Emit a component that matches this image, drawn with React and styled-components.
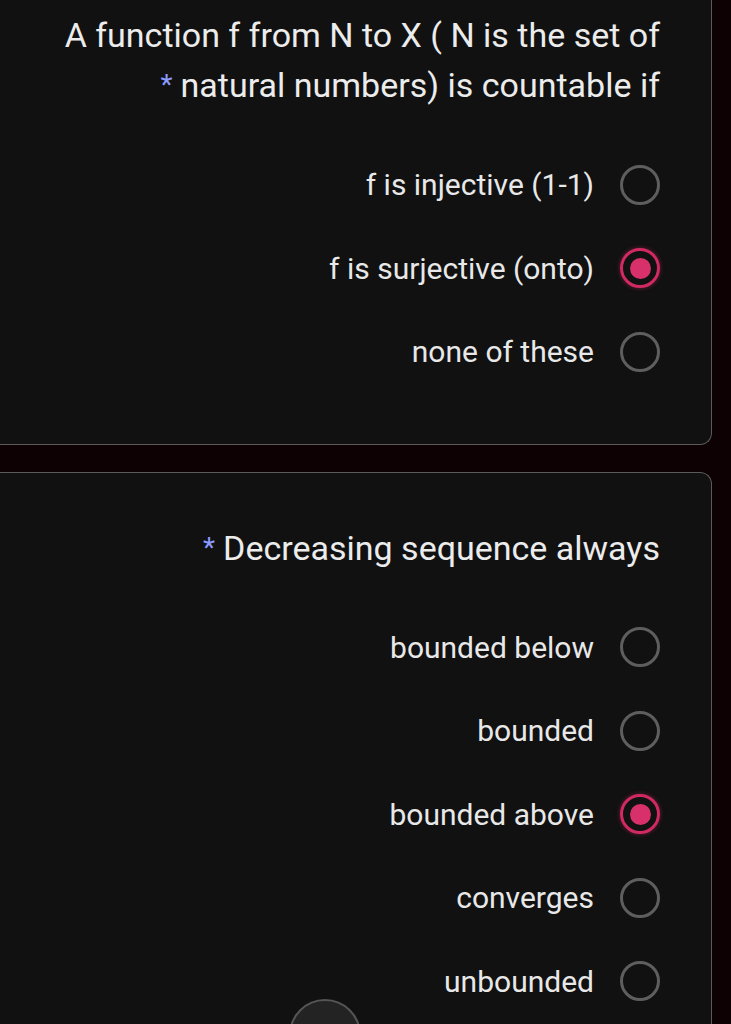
import React from "react";
import styled, { createGlobalStyle } from "styled-components";

const questions = [
  {
    lines: ["A function f from N to X ( N is the set of", "natural numbers) is countable if"],
    options: ["f is injective (1-1)", "f is surjective (onto)", "none of these"],
    selected: 1,
  },
  {
    lines: ["Decreasing sequence always"],
    options: ["bounded below", "bounded", "bounded above", "converges", "unbounded"],
    selected: 2,
  },
];

function App() {
  return (
    <Page>
      <GlobalStyle />
      {questions.map((q, i) => (
        <Card key={i} $first={i === 0}>
          <Title>
            {q.lines.map((line, j) => (
              <Line key={j}>
                {j === q.lines.length - 1 && <Req>*</Req>}
                {line}
              </Line>
            ))}
          </Title>
          <Options>
            {q.options.map((opt, k) => (
              <Option key={k}>
                <Label>{opt}</Label>
                <Radio $on={k === q.selected} />
              </Option>
            ))}
          </Options>
        </Card>
      ))}
      <Fab />
    </Page>
  );
}

const GlobalStyle = createGlobalStyle`
  html, body {
    margin: 0;
    padding: 0;
    background: #0e0103;
    overflow: hidden;
  }
  body {
    font-family: Roboto, "Noto Sans", Arial, sans-serif;
    color: #e6e6e6;
  }
`;

const Page = styled.div`
  width: 731px;
  height: 1024px;
  overflow: hidden;
  background: #0e0103;
`;

const Card = styled.section`
  width: 711px;
  background: #111111;
  border: 1.5px solid #5c5a5a;
  border-left: none;
  border-radius: ${(p) => (p.$first ? "0 0 12px 0" : "0 12px 0 0")};
  ${(p) => (p.$first ? "border-top: none;" : "border-bottom: none;")}
  margin-bottom: 27px;
  padding: ${(p) => (p.$first ? "10px 0 50px" : "50px 0 50px")};
  box-sizing: content-box;
`;

const Title = styled.div`
  padding-right: 51px;
  text-align: right;
  font-size: 34px;
  line-height: 50px;
  color: #ececec;
`;

const Line = styled.div`
  white-space: nowrap;
`;

const Req = styled.span`
  color: #8c9bff;
  font-size: 28px;
  margin-right: 8px;
  vertical-align: 3px;
`;

const Options = styled.div`
  margin-top: 33px;
  padding-right: 51px;
`;

const Option = styled.div`
  height: 83.5px;
  display: flex;
  align-items: center;
  justify-content: flex-end;
  gap: 26px;
`;

const Label = styled.span`
  font-size: 30px;
  color: #e8e8e8;
`;

const Radio = styled.span`
  width: 40px;
  height: 40px;
  box-sizing: border-box;
  border-radius: 50%;
  border: 3px solid ${(p) => (p.$on ? "#d12a62" : "#5e5e5e")};
  display: flex;
  align-items: center;
  justify-content: center;
  flex-shrink: 0;
  ${(p) => p.$on && "box-shadow: 0 0 4px rgba(209, 42, 98, 0.5);"}
  &::after {
    content: "";
    width: 21px;
    height: 21px;
    border-radius: 50%;
    background: #d8306a;
    display: ${(p) => (p.$on ? "block" : "none")};
  }
`;

const Fab = styled.div`
  position: fixed;
  left: 289px;
  top: 999px;
  width: 72px;
  height: 72px;
  border-radius: 50%;
  background: #232323;
  border: 2px solid #555;
  box-sizing: border-box;
`;

export default App;
